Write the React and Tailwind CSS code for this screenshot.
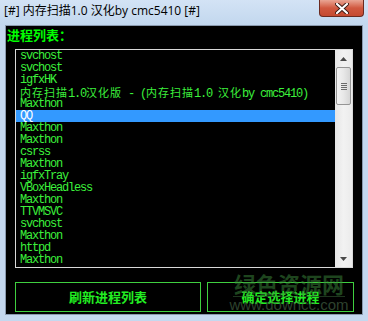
import React from "react";

const mono = { fontFamily: '"Liberation Mono", "Noto Sans CJK SC", monospace' };
const cjk = { fontFamily: '"Noto Sans CJK SC", sans-serif' };

const items = [
  "svchost",
  "svchost",
  "igfxHK",
  "__CJK__",
  "Maxthon",
  "QQ",
  "Maxthon",
  "Maxthon",
  "csrss",
  "Maxthon",
  "igfxTray",
  "VBoxHeadless",
  "Maxthon",
  "TTVMSVC",
  "svchost",
  "Maxthon",
  "httpd",
  "Maxthon",
];

function C({ children }) {
  return (
    <span className="text-[11px] leading-[12px] tracking-[1px]" style={cjk}>
      {children}
    </span>
  );
}

function CjkLine() {
  return (
    <>
      <C>内存扫描</C>1.0<C>汉化版</C> - (<C>内存扫描</C>1.0 <C>汉化</C>by cmc5410)
    </>
  );
}

function Tri({ down }) {
  return (
    <svg width="7" height="4" viewBox="0 0 7 4">
      {down ? (
        <path d="M0 0 H7 L3.5 4 Z" fill="#4a4a4a" />
      ) : (
        <path d="M0 4 H7 L3.5 0 Z" fill="#4a4a4a" />
      )}
    </svg>
  );
}

export default function App() {
  return (
    <div className="relative w-[368px] h-[321px] overflow-hidden bg-[#c4d8ef] flex flex-col">
      {/* title bar */}
      <div className="h-[25px] shrink-0 bg-gradient-to-b from-[#d3e3f5] to-[#c2d7ee] flex items-start">
        <div
          className="pl-[4px] pt-[3px] text-[12px] leading-[16px] text-black"
          style={{ fontFamily: '"Open Sans", "Noto Sans CJK SC", sans-serif' }}
        >
          [#] 内存扫描1.0 汉化by cmc5410 [#]
        </div>
      </div>
      {/* close button */}
      <div className="absolute top-0 right-[4px] w-[45px] h-[17px] rounded-b-[4px] border border-t-0 border-[#6b2a20] bg-gradient-to-b from-[#e9a594] via-[#d0583f] to-[#c44a31] flex items-center justify-center">
        <svg width="14" height="11" viewBox="0 0 14 11">
          <path d="M2 1 L12 10 M12 1 L2 10" stroke="#3a1a14" strokeWidth="4" strokeLinecap="round" />
          <path d="M2 1 L12 10 M12 1 L2 10" stroke="#ffffff" strokeWidth="2.2" strokeLinecap="round" />
        </svg>
      </div>

      {/* client area */}
      <div className="ml-[5px] w-[358px] h-[290px] border border-[#8a9aae] bg-black relative flex flex-col">
        <div
          className="ml-[1px] mt-[1px] h-[15px] text-[13px] leading-[15px] font-bold text-[#00ff00]"
          style={cjk}
        >
          进程列表：
        </div>

        {/* list box */}
        <div className="ml-[9px] mt-[7px] w-[338px] h-[219px] border border-[#d8d8d8] flex">
          <div className="w-[319px] flex flex-col">
            {items.map((it, i) => (
              <div
                key={i}
                className={
                  "h-[12px] pl-[4px] text-[12px] leading-[12px] tracking-[-1.2px] whitespace-nowrap " +
                  (i === 5 ? "bg-[#3399ff] text-white" : "text-[#3cf03c]")
                }
                style={mono}
              >
                {it === "__CJK__" ? <CjkLine /> : it}
              </div>
            ))}
          </div>
          {/* scrollbar */}
          <div className="w-[17px] bg-gradient-to-r from-[#e6e6e6] via-[#f2f2f2] to-[#ebebeb] flex flex-col">
            <div className="h-[17px] flex items-center justify-center">
              <Tri />
            </div>
            <div className="mx-[1px] h-[38px] rounded-[2px] border border-[#959595] bg-gradient-to-r from-[#f3f3f3] via-[#e8e8e8] to-[#d6d6d6] flex flex-col items-center justify-center gap-[1px]">
              <div className="w-[6px] h-[1px] bg-[#6a6a6a]" />
              <div className="w-[6px] h-[1px] bg-[#6a6a6a]" />
              <div className="w-[6px] h-[1px] bg-[#6a6a6a]" />
              <div className="w-[6px] h-[1px] bg-[#6a6a6a]" />
            </div>
            <div className="flex-1" />
            <div className="h-[17px] flex items-center justify-center">
              <Tri down />
            </div>
          </div>
        </div>

        {/* buttons */}
        <div className="ml-[9px] mt-[14px] flex gap-[6px]">
          <div
            className="w-[186px] h-[30px] border border-[#3fcf3f] flex items-center justify-center text-[13px] font-bold text-[#22ee22]"
            style={cjk}
          >
            刷新进程列表
          </div>
          <div
            className="w-[147px] h-[30px] border border-[#3fcf3f] flex items-center justify-center text-[13px] font-bold text-[#22ee22]"
            style={cjk}
          >
            确定选择进程
          </div>
        </div>
      </div>

      {/* watermark */}
      <div className="absolute left-[230px] top-[270px] w-[118px] flex flex-col items-center pointer-events-none">
        <div
          className="whitespace-nowrap text-[22px] leading-[26px] font-bold text-[#3c8a3c] opacity-50"
          style={cjk}
        >
          绿色资源网
        </div>
        <div className="w-[112px] h-[1px] bg-[#3c6a3c] opacity-50" />
        <div
          className="whitespace-nowrap text-[15px] leading-[16px] text-[#4c6e4c] opacity-60"
          style={{ fontFamily: '"Liberation Sans", sans-serif' }}
        >
          www.downcc.com
        </div>
      </div>
    </div>
  );
}
